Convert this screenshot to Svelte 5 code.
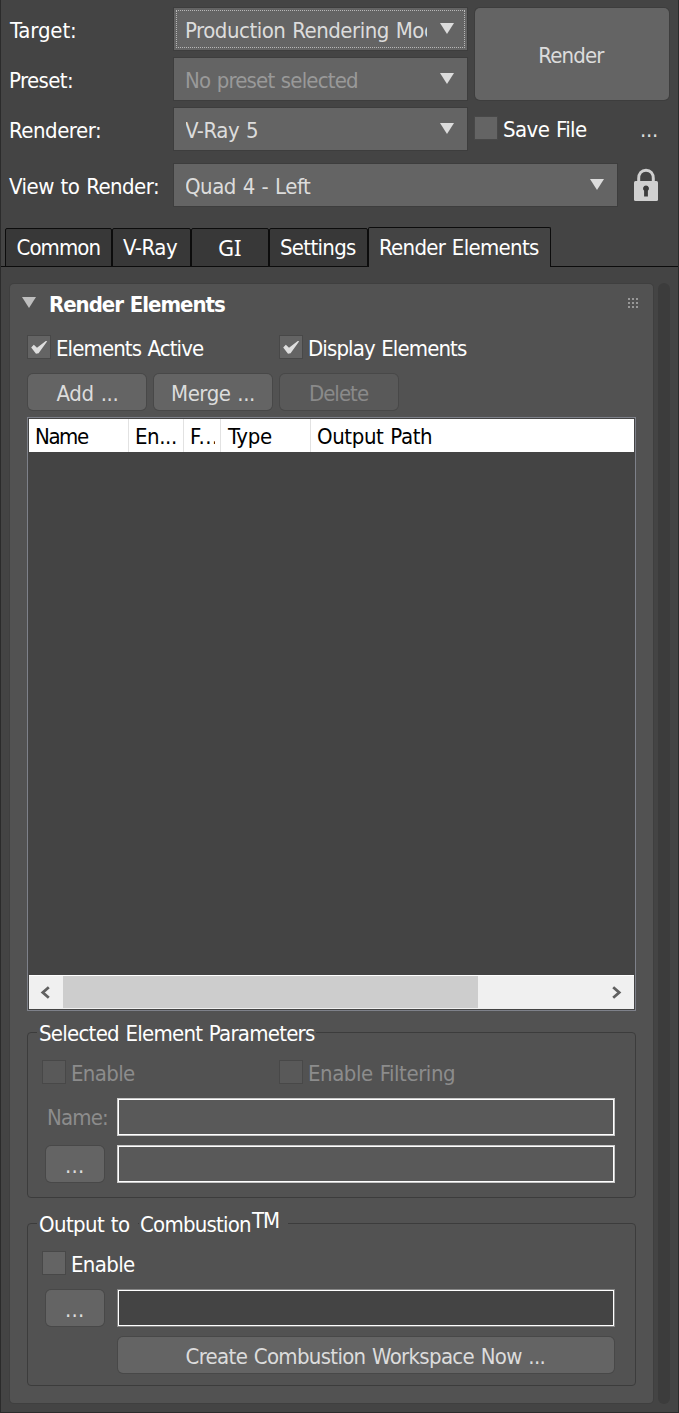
<script>
  const measurer = document.createElement('canvas').getContext('2d');

  // Tracks a label so that its ink spans the given width and starts at its box edge.
  function fit(node, width) {
    const style = getComputedStyle(node);
    measurer.font = `${style.fontWeight} ${style.fontSize} ${style.fontFamily}`;
    const text = node.textContent;
    const m = measurer.measureText(text);
    const ink = m.actualBoundingBoxLeft + m.actualBoundingBoxRight;
    const spaces = text.split(' ').length - 1;
    const spacing = (width - ink - spaces) / Math.max(1, text.length - 1);
    const overhang = /^[TV]/.test(text) ? 1 : 0;
    node.style.letterSpacing = `${spacing}px`;
    node.style.width = `${width}px`;
    node.style.textIndent = `${m.actualBoundingBoxLeft - overhang}px`;
  }

  const fields = [
    { label: 'Target:', lw: 66, value: 'Production Rendering Mode', vw: 262, focus: true },
    { label: 'Preset:', lw: 62, value: 'No preset selected', vw: 171, dim: true },
    { label: 'Renderer:', lw: 90, value: 'V-Ray 5', vw: 72 }
  ];
  const tabs = [
    { name: 'Common', w: 107, tw: 82 },
    { name: 'V-Ray', w: 79, tw: 55 },
    { name: 'GI', w: 78, tw: 22, serifI: true },
    { name: 'Settings', w: 99, tw: 75 },
    { name: 'Render Elements', w: 183, tw: 159, active: true }
  ];
  const columns = [
    { name: 'Name', w: 100, tw: 53 },
    { name: 'En...', w: 55, tw: 40 },
    { name: 'F...', w: 37, tw: 26, clip: true },
    { name: 'Type', w: 90, tw: 45 },
    { name: 'Output Path', w: 323, tw: 113, last: true }
  ];
</script>

{#snippet t(text, width)}<span class="t" use:fit={width}>{text}</span>{/snippet}

{#snippet arrow()}
  <svg class="arrow" width="14" height="11" viewBox="0 0 14 11"><path d="M0 0H14L7 11Z" fill="currentColor" /></svg>
{/snippet}

{#snippet check(text, width, checked = false, disabled = false)}
  <label class="check" class:disabled>
    <span class="box">
      {#if checked}
        <svg width="22" height="22" viewBox="0 0 22 22"><path d="M3.2 11.4L5.8 8.8L9 11.8L17.8 4.9L19.2 5.3L10.6 17.2L8 17.8Z" fill="#dedede" /></svg>
      {/if}
    </span>
    {@render t(text, width)}
  </label>
{/snippet}

<div class="dialog">
  <section class="form">
    <div class="fields">
      {#each fields as f}
        <div class="field">
          <div class="label">{@render t(f.label, f.lw)}</div>
          <div class="combo" class:dim={f.dim} class:focus={f.focus}>
            <div class="value">{@render t(f.value, f.vw)}</div>
            {@render arrow()}
          </div>
        </div>
      {/each}
    </div>
    <div class="actions">
      <button class="btn render">{@render t('Render', 66)}</button>
      <div class="save">
        {@render check('Save File', 83)}
        <span class="more">{@render t('...', 15)}</span>
      </div>
    </div>
  </section>

  <section class="field view">
    <div class="label">{@render t('View to Render:', 149)}</div>
    <div class="combo">
      <div class="value">{@render t('Quad 4 - Left', 125)}</div>
      {@render arrow()}
    </div>
    <svg class="lock" width="24" height="34" viewBox="0 0 24 34">
      <path d="M4.7 15V10.5C4.7 5.6 7.6 2.2 12 2.2S19.3 5.6 19.3 10.5V15" fill="none" stroke="#d0d0d0" stroke-width="3" />
      <rect y="13" width="24" height="20" rx="1.5" fill="#d0d0d0" />
      <path d="M12 17.4A3 3 0 0 1 13.9 22.7V28.5H10.1V22.7A3 3 0 0 1 12 17.4Z" fill="#3c3c3c" />
    </svg>
  </section>

  <nav class="tabs">
    {#each tabs as tab}
      <div class="tab" class:active={tab.active} class:serif-i={tab.serifI} style="width: {tab.w}px">{@render t(tab.name, tab.tw)}</div>
    {/each}
  </nav>

  <main>
    <section class="panel">
      <header>
        {@render arrow()}
        <strong>{@render t('Render Elements', 175)}</strong>
        <svg class="grip" width="10" height="10" viewBox="0 0 10 10">
          {#each [0, 4, 8] as y}{#each [0, 4, 8] as x}<rect {x} {y} width="2" height="2" fill="#989898" />{/each}{/each}
        </svg>
      </header>

      <div class="checks top">
        {@render check('Elements Active', 147, true)}
        {@render check('Display Elements', 158, true)}
      </div>

      <div class="buttons">
        <button class="btn">{@render t('Add ...', 61)}</button>
        <button class="btn">{@render t('Merge ...', 82)}</button>
        <button class="btn" disabled>{@render t('Delete', 59)}</button>
      </div>

      <div class="list">
        <div class="head">
          {#each columns as c}
            <div class="col" class:last={c.last} class:clip={c.clip} style="width: {c.w}px">
              <div>{@render t(c.name, c.tw)}</div>
            </div>
          {/each}
        </div>
        <div class="rows"></div>
        <div class="hscroll">
          <svg width="34" height="32" viewBox="0 0 34 32"><path d="M19.8 11.3L13.8 16.5L19.8 21.7" fill="none" stroke="#606060" stroke-width="2.8" /></svg>
          <div class="thumb"></div>
          <svg class="right" width="34" height="32" viewBox="0 0 34 32"><path d="M13.2 11.3L19.2 16.5L13.2 21.7" fill="none" stroke="#606060" stroke-width="2.8" /></svg>
        </div>
      </div>

      <div class="group params">
        <div class="legend"><span>{@render t('Selected Element Parameters', 275)}</span></div>
        <div class="checks">
          {@render check('Enable', 63, false, true)}
          {@render check('Enable Filtering', 145, false, true)}
        </div>
        <div class="row name">
          <div class="lead">{@render t('Name:', 59)}</div>
          <div class="input off"></div>
        </div>
        <div class="row second">
          <div class="lead"><button class="btn small">{@render t('...', 16)}</button></div>
          <div class="input off"></div>
        </div>
      </div>

      <div class="group output">
        <div class="legend">
          <span class="first">{@render t('Output to', 90)}</span>
          <span class="brand">{@render t('Combustion', 109)}<sup>{@render t('TM', 28)}</sup></span>
        </div>
        <div class="checks">{@render check('Enable', 63)}</div>
        <div class="row">
          <div class="lead"><button class="btn small">{@render t('...', 16)}</button></div>
          <div class="input"></div>
        </div>
        <button class="btn create">{@render t('Create Combustion Workspace Now ...', 358)}</button>
      </div>
    </section>
    <div class="vscroll"></div>
  </main>
</div>

<style>
  :global(body) { background: #444; }
  .dialog, .dialog :global(*) { box-sizing: border-box; }
  .dialog {
    width: 679px;
    height: 1413px;
    overflow: hidden;
    background: #444;
    border: solid #2b2b2b;
    border-width: 0 1px 1px;
    padding-top: 8px;
    color: #fff;
    font: 22px/30px "DejaVu Sans Condensed", "Noto Sans", sans-serif;
  }
  .t { display: block; height: 30px; line-height: 34px; white-space: pre; word-spacing: 1px; flex: none; }
  svg { display: block; flex: none; }

  .form { display: flex; gap: 8px; }
  .fields { display: flex; flex-direction: column; gap: 8px; }
  .field { display: flex; align-items: center; height: 42px; }
  .label { width: 173px; padding-left: 9px; }
  .combo {
    display: flex;
    align-items: center;
    justify-content: space-between;
    width: 293px;
    height: 42px;
    padding: 0 13px 0 12px;
    background: #646464;
    box-shadow: 0 0 0 1px #3d3d3d;
    color: #dcdcdc;
  }
  .combo .arrow { margin-bottom: 1px; }
  .combo.focus { outline: 1px dotted #b8b8b8; outline-offset: -3px; }
  .value { width: 241px; overflow: hidden; }
  .dim .value { color: #999; }
  .view { margin-top: 14px; }
  .view .combo { width: 443px; }
  .lock { margin: 0 0 0 17px; }

  .btn {
    display: flex;
    align-items: center;
    justify-content: center;
    width: 118px;
    height: 36px;
    padding: 0;
    border: 0;
    border-radius: 5px;
    background: #646464;
    box-shadow: 0 0 0 1px #484848;
    color: #dcdcdc;
    font: inherit;
  }
  .btn:disabled { background: #595959; color: #8a8a8a; }
  .btn.render { width: 194px; height: 92px; padding-right: 1px; box-shadow: 0 0 0 1px #3d3d3d; }
  .save { display: flex; align-items: center; justify-content: space-between; height: 40px; margin-top: 8px; }
  .more { margin-right: 12px; color: #dcdcdc; }

  .check { display: flex; align-items: center; gap: 7px; }
  .box { width: 22px; height: 22px; background: #646464; box-shadow: 0 0 0 1px #484848; }
  .disabled { color: #8c8c8c; }
  .disabled .box { background: #595959; }

  .tabs {
    display: flex;
    align-items: flex-end;
    height: 40px;
    margin-top: 21px;
    padding-left: 4px;
    background: linear-gradient(#0c0c0c, #0c0c0c) bottom / 100% 1px no-repeat;
  }
  .tab {
    display: flex;
    justify-content: center;
    height: 39px;
    padding-top: 2px;
    border: 1px solid #0c0c0c;
    border-radius: 2px 2px 0 0;
    background: #383838;
  }
  .tab.active { height: 40px; padding-top: 3px; border-bottom: 0; background: #444; }
  .serif-i { padding-top: 1px; font-family: "Noto Sans", sans-serif; }

  main { display: flex; gap: 5px; padding: 17px 0 0 9px; }
  .panel {
    width: 643px;
    height: 1119px;
    padding-top: 4px;
    border-radius: 4px;
    background: #525252;
    box-shadow: 0 0 0 1px #3f3f3f;
  }
  .vscroll { width: 12px; height: 1121px; margin-top: -1px; border-radius: 6px; background: #3c3c3c; }

  header { display: flex; align-items: center; padding: 0 15px 0 12px; color: #bebebe; }
  header .arrow { margin-bottom: 1px; }
  header strong { margin-left: 14px; color: #fff; font-weight: 700; }
  .grip { margin-left: auto; }

  .checks { display: grid; grid-template-columns: 237px 1fr; margin-top: 11px; padding-left: 15px; }
  .checks.top { grid-template-columns: 252px 1fr; margin-top: 14px; padding-left: 18px; }
  .buttons { display: flex; gap: 8px; margin-top: 12px; padding-left: 18px; }

  .list {
    width: 609px;
    height: 594px;
    margin: 7px 0 0 17px;
    padding: 1px;
    border: 1px solid #7e818a;
    background: #444;
  }
  .head { display: flex; height: 33px; background: #fff; color: #000; }
  .col { flex: none; padding: 1px 0 0 7px; border-right: 1px solid #e2e2e2; }
  .col.last { border: 0; }
  .clip div { width: 24px; overflow: hidden; }
  .rows { height: 523px; }
  .hscroll { display: flex; height: 34px; padding: 1px 0; background: #f0f0f0; box-shadow: inset 0 1px #fff; }
  .thumb { width: 415px; background: #cdcdcd; }
  .hscroll .right { margin-left: auto; }

  .group {
    width: 609px;
    height: 166px;
    margin: 21px 0 0 17px;
    border: 1px solid #3c3c3c;
    border-radius: 4px;
  }
  .group.output { height: 163px; margin-top: 25px; }
  .legend { display: flex; gap: 1px; height: 30px; margin: -17px 0 0 9px; }
  .legend > span { display: flex; padding: 1px 1px 0 3px; background: #525252; }
  .legend .first { width: 101px; }
  .legend .brand { width: 149px; padding-left: 2px; gap: 2px; }
  sup { margin-top: -4px; font-size: inherit; line-height: inherit; }

  .row { display: flex; height: 38px; margin-top: 11px; padding-left: 18px; align-items: center; }
  .row.second { margin-top: 9px; }
  .lead { width: 71px; }
  .name .lead { padding: 0 0 2px 2px; color: #8c8c8c; }
  .btn.small { width: 58px; }
  .input {
    width: 498px;
    height: 38px;
    border: 1px solid #858585;
    background: #444;
    box-shadow: inset 0 0 0 1px #fff;
  }
  .input.off { border-color: #c8c8c8; background: #595959; }
  .btn.create { width: 496px; margin: 10px 0 0 90px; padding-right: 1px; }
</style>
